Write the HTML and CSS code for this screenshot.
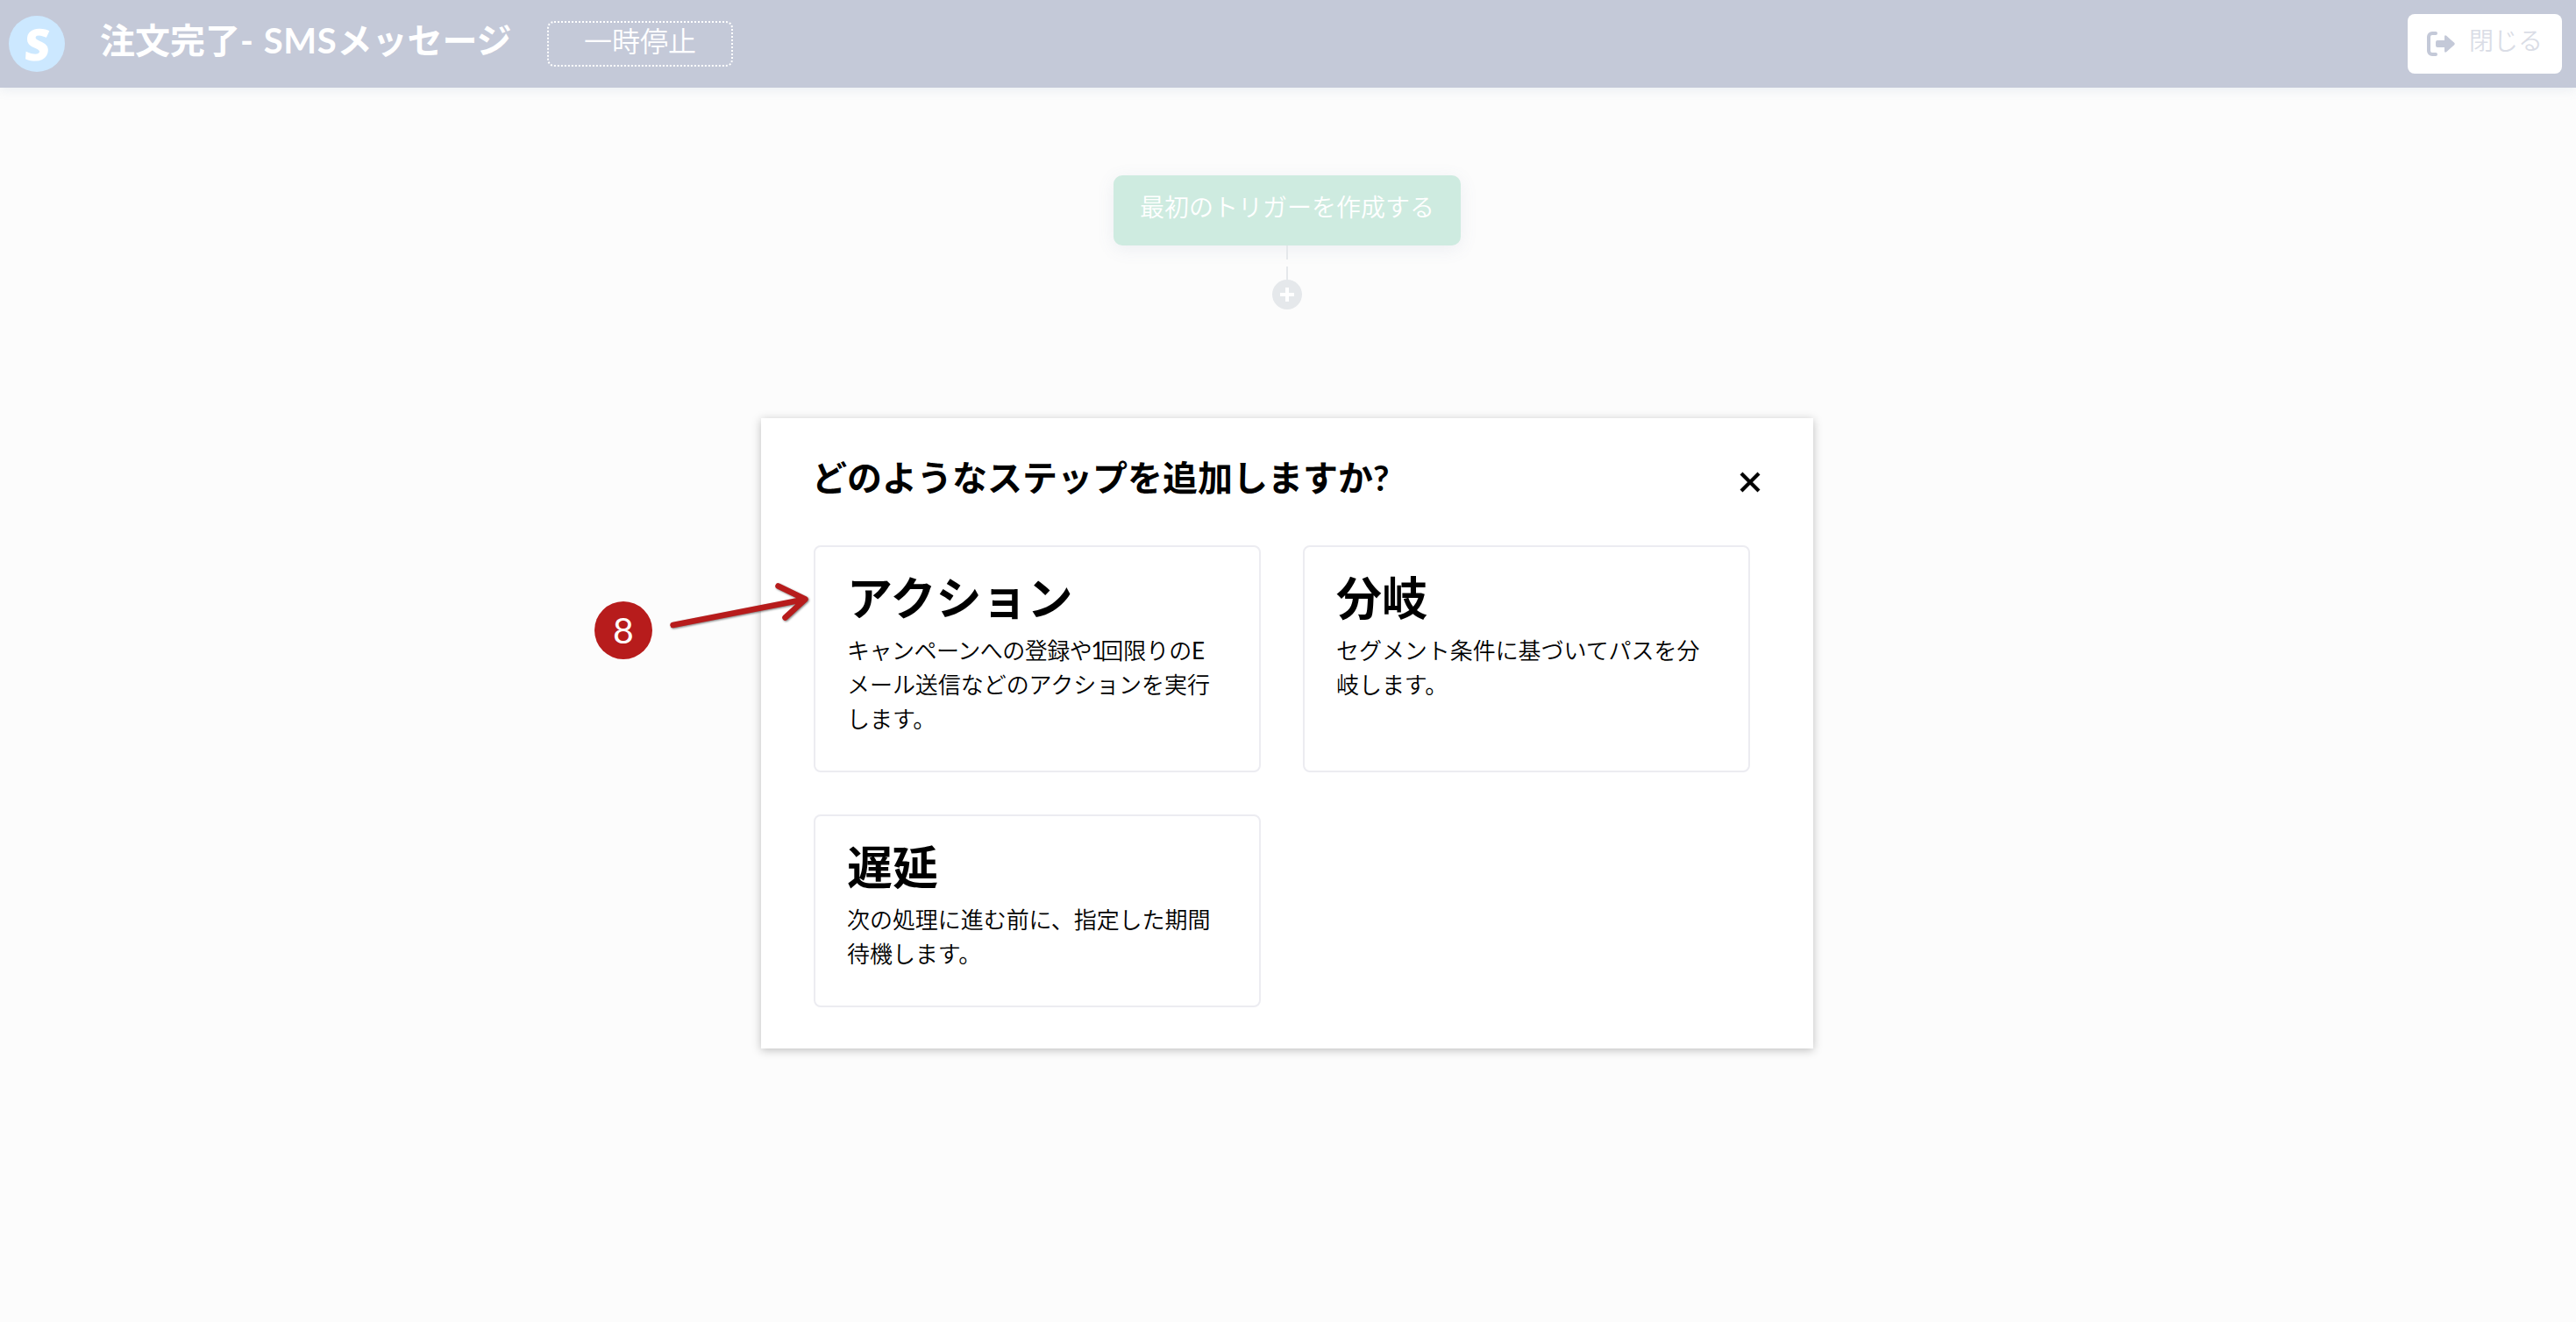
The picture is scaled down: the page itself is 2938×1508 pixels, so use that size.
FILE: index.html
```html
<!DOCTYPE html>
<html lang="ja">
<head>
<meta charset="utf-8">
<title>注文完了- SMSメッセージ</title>
<link rel="stylesheet" href="styles.css">
</head>
<body>
<header class="topbar">
  <div class="logo"><span class="logo-letter">S</span></div>
  <h1 class="topbar-title">注文完了- <span class="topbar-latin">SMS</span>メッセージ</h1>
  <button class="pause-btn">一時停止</button>
  <button class="close-btn">
    <svg class="exit-icon" width="32" height="28" viewBox="0 0 32 28">
      <path d="M10 2H6a4 4 0 0 0-4 4v16a4 4 0 0 0 4 4h4" fill="none" stroke="currentColor" stroke-width="4" stroke-linecap="round"/>
      <path d="M12 10h8V6q0-2.600 2.200-1.200l9 8q1 1.200 0 2.400l-9 8Q20 24.600 20 22v-4h-8q-2 0-2-2v-4q0-2 2-2z" fill="currentColor"/>
    </svg>
    <span class="close-label">閉じる</span>
  </button>
</header>
<main class="canvas">
  <button class="trigger">最初のトリガーを作成する</button>
  <div class="line line-top"></div>
  <div class="line line-bottom"></div>
  <svg class="add-step" width="34" height="34" viewBox="0 0 34 34">
    <circle cx="17" cy="17" r="17" fill="#e5e8eb"/>
    <path d="M9 17h16M17 9v16" stroke="#fff" stroke-width="4"/>
  </svg>
</main>
<section class="modal">
  <div class="modal-head">
    <h2 class="modal-title">どのようなステップを追加しますか?</h2>
    <svg class="modal-close" width="24" height="24" viewBox="0 0 24 24">
      <path d="M2 2l20 20M22 2L2 22" stroke="#000" stroke-width="4.200"/>
    </svg>
  </div>
  <div class="cards">
    <article class="card">
      <h3 class="card-title">アクション</h3>
      <p class="card-text"><span class="tight">キャンペーンへの登録や</span><span class="numeral">1</span>回限りの<span class="latin">E</span><br>メール送信などのアクションを実行<br>します。</p>
    </article>
    <article class="card">
      <h3 class="card-title">分岐</h3>
      <p class="card-text">セグメント条件に基づいてパスを分<br>岐します。</p>
    </article>
    <article class="card">
      <h3 class="card-title">遅延</h3>
      <p class="card-text">次の処理に進む前に、指定した期間<br>待機します。</p>
    </article>
  </div>
</section>
<div class="marker">8</div>
<svg class="arrow" width="170" height="60" viewBox="0 0 170 60">
  <path d="M8.500 53L159.500 23.500M128.500 8.500L159.500 23.500L136.500 44.500" fill="none" stroke="#b71c1c" stroke-width="6.500" stroke-linecap="round" stroke-linejoin="round"/>
</svg>
</body>
</html>
```
FILE: styles.css
```css
* { box-sizing: border-box; margin: 0; padding: 0; }
body {
  height: 1508px;
  background: #fcfcfc;
  color: #000;
  font-family: Lato, "Noto Sans CJK JP", sans-serif;
  position: relative;
  overflow: hidden;
}
button { font-family: inherit; border: 0; }
.topbar {
  height: 100px;
  padding: 0 16px 0 10px;
  display: flex;
  align-items: center;
  background: #c4c9d8;
  color: #fff;
  box-shadow: 0 2px 12px rgba(120, 150, 180, .15);
}
.logo {
  width: 64px;
  height: 64px;
  border-radius: 50%;
  background: #cce8ff;
  display: flex;
  align-items: center;
  justify-content: center;
}
.logo-letter {
  font-family: "Noto Sans", sans-serif;
  font-size: 50px;
  line-height: 64px;
  font-weight: 900;
  transform: skewX(-4deg);
}
.topbar-title {
  margin-left: 40px;
  width: 510px;
  font-size: 40px;
  line-height: 60px;
  padding-bottom: 9px;
  font-weight: 700;
  white-space: nowrap;
}
.topbar-latin { margin-left: 2px; letter-spacing: .7px; }
.pause-btn {
  width: 212px;
  height: 52px;
  padding-bottom: 6px;
  border: 2px dotted #fff;
  border-radius: 8px;
  background: none;
  color: #fff;
  font-size: 32px;
  line-height: 42px;
  font-weight: 350;
}
.close-btn {
  margin-left: auto;
  width: 176px;
  height: 68px;
  padding-left: 22px;
  display: flex;
  align-items: center;
  gap: 16px;
  border-radius: 8px;
  background: #fff;
  color: #c4c9d8;
}
.close-label {
  font-size: 28px;
  line-height: 40px;
  padding-bottom: 8px;
  font-weight: 350;
  color: #dadde6;
}
.canvas {
  width: 2936px;
  padding-top: 100px;
  display: flex;
  flex-direction: column;
  align-items: center;
}
.trigger {
  width: 396px;
  height: 80px;
  padding-bottom: 10px;
  border-radius: 10px;
  background: #ceebe0;
  color: #fff;
  font-size: 28px;
  font-weight: 350;
  box-shadow: 0 4px 20px rgba(100, 120, 160, .1);
}
.line { width: 2px; background: #e5e8eb; }
.line-top { height: 16px; margin-bottom: 8px; }
.line-bottom { height: 15px; }
.modal {
  position: absolute;
  left: 868px;
  top: 477px;
  width: 1200px;
  height: 719px;
  padding: 33px 60px 0;
  background: #fff;
  box-shadow: 0 2px 10px rgba(0, 0, 0, .25);
}
.modal-head {
  height: 112px;
  display: flex;
  justify-content: space-between;
  align-items: flex-start;
}
.modal-title { margin-left: -2px; font-size: 40px; line-height: 70px; font-weight: 700; }
.modal-close { margin-top: 28px; }
.cards {
  display: grid;
  grid-template-columns: 510px 510px;
  grid-template-rows: 259px 220px;
  gap: 48px;
}
.card { border: 2px solid #ececf1; border-radius: 8px; padding: 19px 36px 0; }
.card-title { margin-bottom: 2px; font-size: 52px; line-height: 78px; font-weight: 700; }
.card-text {
  font-size: 26px;
  line-height: 39px;
  font-weight: 350;
  letter-spacing: -.05px;
  white-space: nowrap;
}
.tight { letter-spacing: -.5px; }
.numeral { margin-left: -1px; letter-spacing: -4px; font-weight: 400; }
.latin { font-weight: 400; }
.marker {
  position: absolute;
  left: 678px;
  top: 686px;
  width: 66px;
  height: 66px;
  border-radius: 50%;
  background: #b71c1c;
  color: #fff;
  font-size: 41px;
  line-height: 65px;
  text-align: center;
}
.arrow {
  position: absolute;
  left: 759px;
  top: 660px;
  filter: drop-shadow(1px 1px 1px rgba(0, 0, 0, .5));
}
```
